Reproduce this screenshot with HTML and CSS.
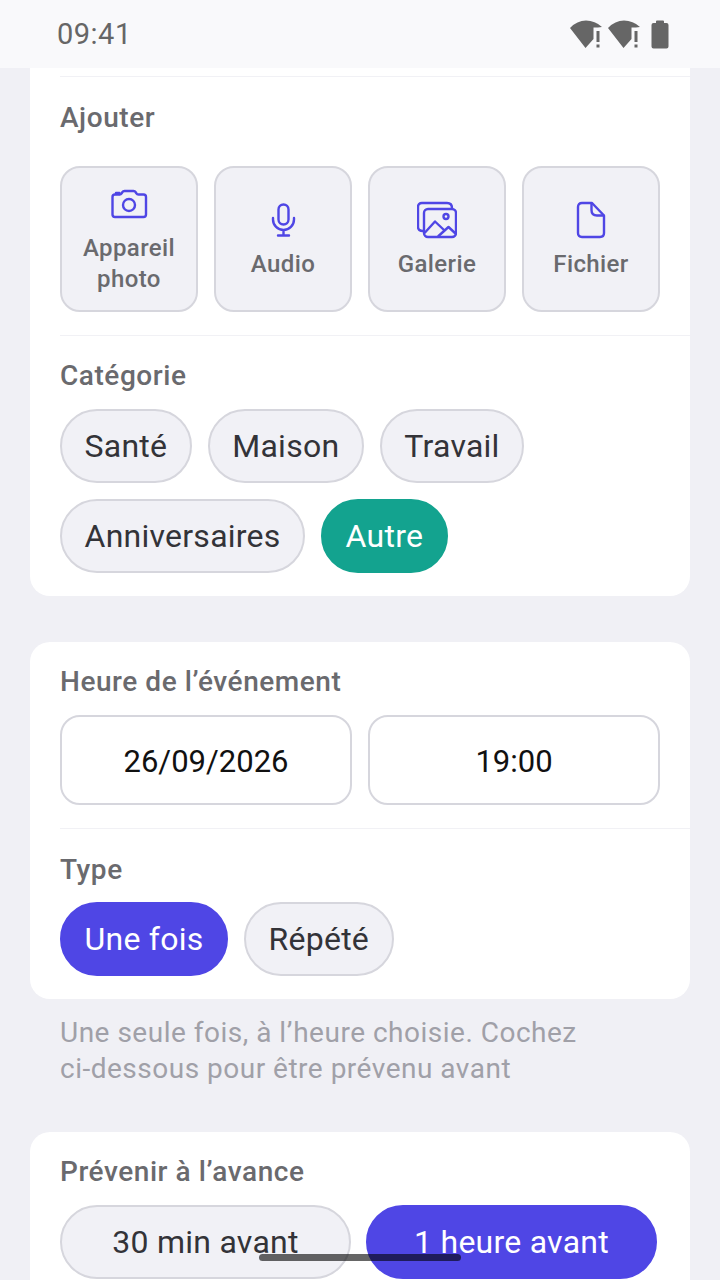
FILE: index.html
```html
<!DOCTYPE html>
<html lang="fr">
<head>
  <meta charset="UTF-8">
  <meta name="viewport" content="width=device-width, initial-scale=1.0">
  <title>Nouveau rappel</title>
  <link rel="stylesheet" href="styles.css">
</head>
<body>
  <div class="status-bar">
    <span class="status-time">09:41</span>
    <div class="status-icons">
      <svg class="status-wifi" width="34" height="30" viewBox="0 0 34 30">
        <path d="M1 9Q8 1.500 17 1.500Q26 1.500 33 8Q29 8.500 24.500 8.500V20L16.500 29Z" fill="#666"/>
        <rect x="27.500" y="12" width="3" height="11" fill="#666"/>
        <rect x="27.500" y="25.500" width="3" height="3" fill="#666"/>
      </svg>
      <svg class="status-wifi" width="34" height="30" viewBox="0 0 34 30">
        <path d="M1 9Q8 1.500 17 1.500Q26 1.500 33 8Q29 8.500 24.500 8.500V20L16.500 29Z" fill="#666"/>
        <rect x="27.500" y="12" width="3" height="11" fill="#666"/>
        <rect x="27.500" y="25.500" width="3" height="3" fill="#666"/>
      </svg>
      <svg class="status-battery" width="18" height="29" viewBox="0 0 18 29">
        <path d="M5 3V1.500Q5 .5 6 .5H12Q13 .5 13 1.500V3H15.500Q17.500 3 17.500 5V26.500Q17.500 28.500 15.500 28.500H2.500Q.5 28.500 .5 26.500V5Q.5 3 2.500 3Z" fill="#666"/>
      </svg>
    </div>
  </div>

  <div class="content">
    <div class="card card-first">
      <div class="section">
        <div class="label label-add">Ajouter</div>
        <div class="tiles">
          <div class="tile">
            <svg class="icon" width="40" height="40" viewBox="0 0 40 40">
              <path d="M6 10.500H10.500Q12 10.500 12.500 9.500L13.500 8Q14 7 15.500 7H24.500Q26 7 26.500 8L27.500 9.500Q28 10.500 29.500 10.500H34.500Q37 10.500 37 13V30.500Q37 33 34.500 33H6Q3.500 33 3.500 30.500V13Q3.500 10.500 6 10.500Z"/>
              <path d="M7 10V9H10.500V10"/>
              <circle cx="20" cy="21" r="6"/>
            </svg>
            <span>Appareil<br>photo</span>
          </div>
          <div class="tile">
            <svg class="icon" width="40" height="40" viewBox="0 0 40 40">
              <rect x="15.500" y="4.500" width="10" height="20" rx="5"/>
              <path d="M10 18V19.500A10.500 10.500 0 0 0 31 19.500V18M20.500 30V35.500M15 35.500H26"/>
            </svg>
            <span>Audio</span>
          </div>
          <div class="tile">
            <svg class="icon" width="40" height="40" viewBox="0 0 40 40">
              <path d="M6 31Q1 31 1 27V7Q1 3 5 3H30Q35 3 35 8"/>
              <rect x="7" y="9" width="32" height="28" rx="4"/>
              <circle cx="29" cy="16.500" r="2.500"/>
              <path d="M8 32.500L18 21.500L26.500 29.500M21.500 36L31.500 27L38.500 33.500"/>
            </svg>
            <span>Galerie</span>
          </div>
          <div class="tile">
            <svg class="icon" width="40" height="40" viewBox="0 0 40 40">
              <path d="M11 3H21L33 15.500V33Q33 37 29 37H11Q7 37 7 33V7Q7 3 11 3Z"/>
              <path d="M20.500 3.500V10Q20.500 15.500 26 15.500H32.500"/>
            </svg>
            <span>Fichier</span>
          </div>
        </div>
      </div>
      <div class="section">
        <div class="label">Catégorie</div>
        <div class="chips">
          <div class="chip">Santé</div>
          <div class="chip">Maison</div>
          <div class="chip">Travail</div>
          <div class="chip">Anniversaires</div>
          <div class="chip chip-teal">Autre</div>
        </div>
      </div>
    </div>

    <div class="card">
      <div class="section">
        <div class="label">Heure de l’événement</div>
        <div class="fields">
          <div class="field">26/09/2026</div>
          <div class="field">19:00</div>
        </div>
      </div>
      <div class="section section-type">
        <div class="label">Type</div>
        <div class="chips">
          <div class="chip chip-blue">Une fois</div>
          <div class="chip">Répété</div>
        </div>
      </div>
    </div>

    <p class="hint">Une seule fois, à l’heure choisie. Cochez<br>ci-dessous pour être prévenu avant</p>

    <div class="card">
      <div class="section">
        <div class="label">Prévenir à l’avance</div>
        <div class="options">
          <div class="chip option">30 min avant</div>
          <div class="chip chip-blue option">1 heure avant</div>
        </div>
      </div>
    </div>
  </div>

  <div class="home-bar"></div>
</body>
</html>
```

FILE: styles.css
```css
html, body {
  margin: 0;
  height: 1280px;
  overflow: hidden;
}
body {
  position: relative;
  background-color: #f0f0f5;
  font-family: 'Roboto', sans-serif;
  color: #333338;
}

/* barre d'etat */
.status-bar {
  height: 68px;
  display: flex;
  align-items: center;
  justify-content: space-between;
  padding: 0 51px 0 57px;
  background-color: #f9f9fb;
  color: #666;
}
.status-time {
  font-size: 29px;
  letter-spacing: 0.5px;
}
.status-icons {
  display: flex;
  align-items: center;
  gap: 4px;
}
.status-battery {
  margin-left: 6px;
}

.content {
  padding: 0 30px;
}
.card {
  background-color: #fff;
  border-radius: 20px;
  margin-top: 46px;
}
.card-first {
  margin-top: 0;
  padding-top: 8px;
  border-radius: 0 0 20px 20px;
}
.section {
  padding: 22px 30px 23px;
  border-top: 1px solid #f1f1f5;
}
.card .section:first-child {
  border-top: none;
}
.card-first .section:first-child {
  border-top: 1px solid #f1f1f5;
  margin-left: 30px;
  padding-left: 0;
  padding-top: 23px;
}
.section + .section {
  margin-left: 30px;
  padding-left: 0;
}
.section-type {
  padding-top: 23px;
}
.section-type .label {
  margin-bottom: 14px;
}
.label {
  font-size: 28px;
  font-weight: 500;
  line-height: 36px;
  letter-spacing: 0.55px;
  color: #6a6a6e;
  margin-bottom: 15px;
}
.label-add {
  margin-bottom: 30px;
}

/* ajouter */
.tiles {
  display: flex;
  gap: 16px;
}
.tile {
  box-sizing: border-box;
  width: 138px;
  height: 146px;
  display: flex;
  flex-direction: column;
  align-items: center;
  justify-content: center;
  gap: 9px;
  padding-top: 1px;
  background-color: #f1f1f6;
  border: 2px solid #d6d6dd;
  border-radius: 20px;
  font-size: 24px;
  font-weight: 500;
  line-height: 31px;
  letter-spacing: 0.4px;
  color: #6a6a6e;
  text-align: center;
}
.icon {
  fill: none;
  stroke: #4f46e5;
  stroke-width: 2.4;
  stroke-linecap: round;
  stroke-linejoin: round;
}

/* puces */
.chips {
  display: flex;
  flex-wrap: wrap;
  gap: 16px;
}
.chip {
  box-sizing: border-box;
  height: 74px;
  display: flex;
  align-items: center;
  justify-content: center;
  padding: 0 22.5px;
  background-color: #f1f1f6;
  border: 2px solid #d6d6dd;
  border-radius: 37px;
  font-size: 32px;
  letter-spacing: 0.25px;
}
.chip-teal {
  background-color: #13a38f;
  border-color: #13a38f;
  color: #fff;
}
.chip-blue {
  background-color: #4f46e5;
  border-color: #4f46e5;
  color: #fff;
}

.fields {
  display: flex;
  gap: 16px;
}
.field {
  box-sizing: border-box;
  flex: 1;
  height: 90px;
  display: flex;
  align-items: center;
  justify-content: center;
  padding-top: 2px;
  border: 2px solid #d6d6dd;
  border-radius: 20px;
  font-size: 31px;
  color: #111;
}

.hint {
  margin: 16px 30px 0;
  font-size: 28px;
  line-height: 36px;
  letter-spacing: 0.5px;
  color: #a0a0a8;
}
.hint + .card {
  margin-top: 45px;
}

.options {
  display: flex;
  gap: 15px;
}
.option {
  width: 291px;
}

/* barre de navigation par-dessus le contenu */
.home-bar {
  position: absolute;
  left: 259px;
  top: 1254px;
  width: 202px;
  height: 7px;
  border-radius: 4px;
  background-color: rgba(0, 0, 0, 0.6);
}
```
